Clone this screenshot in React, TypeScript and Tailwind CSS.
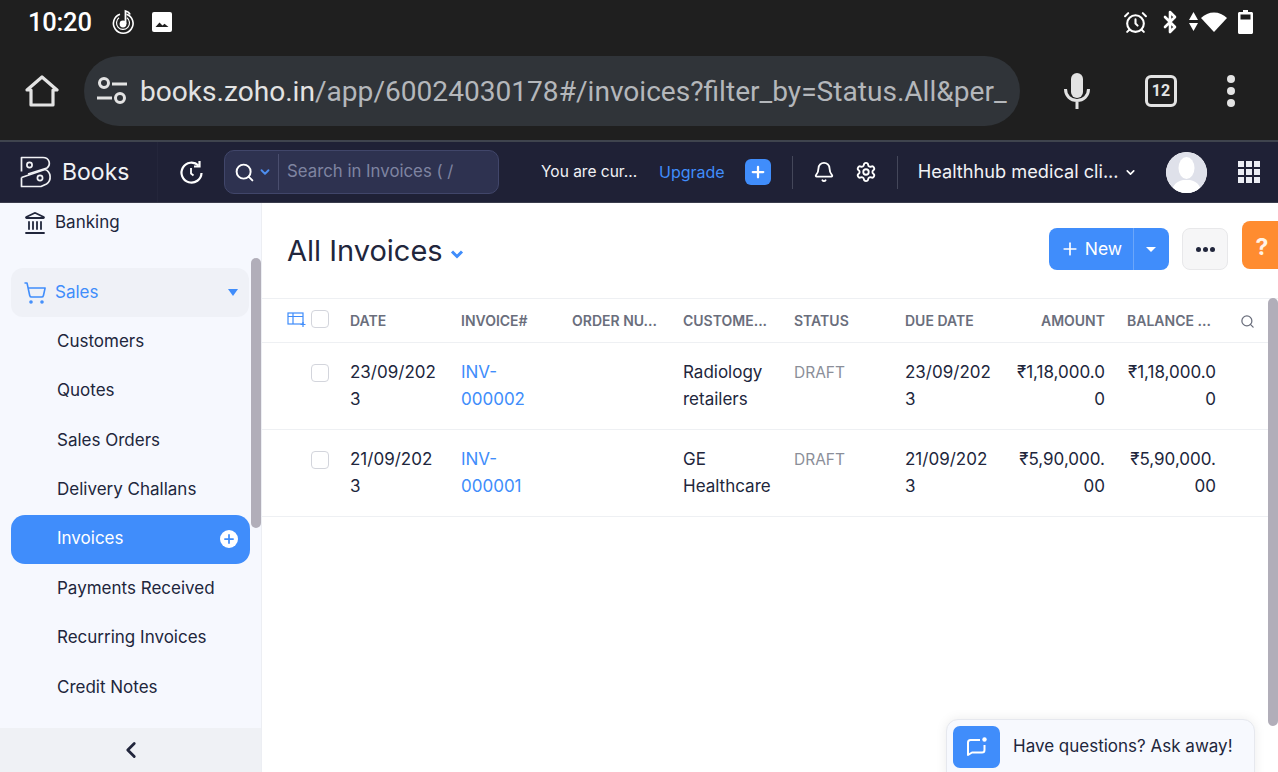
import React from 'react';
import { AlarmClock, Bluetooth, Search, Bell, Settings, ChevronLeft, ChevronDown, Plus, Landmark, ShoppingCart } from 'lucide-react';

const salesItems = ['Customers', 'Quotes', 'Sales Orders', 'Delivery Challans', 'Invoices', 'Payments Received', 'Recurring Invoices', 'Credit Notes'];

const invoices = [
  { date: ['23/09/202', '3'], no: ['INV-', '000002'], customer: ['Radiology', 'retailers'], due: ['23/09/202', '3'], amount: ['₹1,18,000.0', '0'] },
  { date: ['21/09/202', '3'], no: ['INV-', '000001'], customer: ['GE', 'Healthcare'], due: ['21/09/202', '3'], amount: ['₹5,90,000.', '00'] },
];

const Lines = ({ lines }: { lines: string[] }) => (
  <>
    {lines.map((l) => (
      <div key={l}>{l}</div>
    ))}
  </>
);

const BooksLogo = () => (
  <svg width="32" height="32" viewBox="0 0 32 32" fill="none" stroke="#f1f2f5" strokeWidth="1.700" strokeLinejoin="round">
    <path d="M1.500 15.500V1.500H23c6 0 8.500 6.500 4 10.500L8 18" />
    <path d="M1.500 21.500L25 13.500c6 2 7 11 1.500 14.500L21 30.500H1.500V21.500" />
    <circle cx="9.500" cy="9" r="2.600" />
    <circle cx="20" cy="22" r="2.600" />
  </svg>
);

const StatusBar = () => (
  <div className="h-[46px] flex items-center justify-between pl-[28px] pr-[25px] pb-[2px] text-white">
    <div className="flex items-center">
      <span className="font-['Roboto',sans-serif] text-[25.500px] font-medium tracking-[-0.2px]">10:20</span>
      <svg className="ml-[19px]" width="24" height="26" viewBox="0 0 24 26" fill="none" stroke="white" strokeWidth="1.600">
        <path d="M9 5.200a9.800 9.800 0 1 0 6.500 0" />
        <path d="M8 8.800a6.500 6.500 0 1 0 8 0" strokeWidth="1.200" />
        <circle cx="12" cy="15" r="3.400" fill="white" stroke="none" />
        <path d="M14.500 15V2c2 .5 3.800 1.500 4.500 3.500" strokeWidth="1.800" />
      </svg>
      <svg className="ml-[16px]" width="22" height="22" viewBox="0 0 22 22">
        <rect x="1" y="1" width="20" height="20" rx="2" fill="white" />
        <path d="M4.500 16l4-4.500 3 3 2-1.800 4 3.300z" fill="#1f1f1f" />
      </svg>
    </div>
    <div className="flex items-center">
      <AlarmClock size={25} strokeWidth={2} />
      <Bluetooth className="ml-[10px]" size={24} strokeWidth={2.600} />
      <svg className="ml-[7px]" width="9" height="20" viewBox="0 0 9 20" fill="white">
        <path d="M4.500 0L9 8H0zM0 11h9l-4.500 8z" />
      </svg>
      <svg className="ml-[3px]" width="26" height="20" viewBox="0 0 26 20" fill="white">
        <path d="M13 20L0 6c7-7.500 19-7.500 26 0z" />
      </svg>
      <svg className="ml-[11px]" width="15" height="24" viewBox="0 0 15 24" fill="white">
        <path d="M5 0h5v2h3.500c.8 0 1.500.7 1.500 1.500V22.500c0 .8-.7 1.500-1.500 1.500h-12C.7 24 0 23.300 0 22.500V3.500C0 2.700.7 2 1.500 2H5z" />
        <rect x="2.500" y="4.500" width="10" height="5" fill="#1f1f1f" />
      </svg>
    </div>
  </div>
);

const BrowserBar = () => (
  <div className="h-[94px] flex items-center text-[#e3e3e3] pb-[4px]">
    <div className="w-[84px] flex justify-center shrink-0">
      <svg width="34" height="34" viewBox="0 0 34 34" fill="none" stroke="#e3e3e3" strokeWidth="3.200" strokeLinejoin="round">
        <path d="M2 16L17 3l15 13h-4v15H6V16z" />
      </svg>
    </div>
    <div className="w-[936px] h-[70px] rounded-full bg-[#303439] flex items-center pl-[12px] pr-[14px] overflow-hidden shrink-0">
      <svg className="shrink-0" width="32" height="30" viewBox="0 0 32 30" fill="none" stroke="#e3e3e3" strokeWidth="3">
        <circle cx="8" cy="7" r="4.500" />
        <path d="M16 8h15M1 22h15" />
        <circle cx="24" cy="22" r="4.500" />
      </svg>
      <div className="ml-[12px] font-['Roboto',sans-serif] text-[28.100px] whitespace-nowrap leading-none pt-[3px]">
        books.zoho.in<span className="text-[#b4b7bb]">/app/60024030178#/invoices?filter_by=Status.All&amp;per_</span>
      </div>
    </div>
    <svg className="ml-[44px] shrink-0" width="26" height="36" viewBox="0 0 26 36" fill="none" stroke="#e3e3e3" strokeWidth="3">
      <rect x="7" y="0" width="12" height="25" rx="6" fill="#e3e3e3" stroke="none" />
      <path d="M1.500 16c0 7 5 11.500 11.500 11.500S24.500 23 24.500 16M13 27.500V36" />
    </svg>
    <div className="ml-[55px] w-[32px] h-[32px] rounded-[6px] border-[3px] border-[#e3e3e3] flex items-center justify-center font-['Roboto',sans-serif] font-bold text-[16px]">12</div>
    <div className="ml-[50px] flex flex-col gap-[4px]">
      <span className="w-[8px] h-[8px] rounded-full bg-[#e3e3e3]" />
      <span className="w-[8px] h-[8px] rounded-full bg-[#e3e3e3]" />
      <span className="w-[8px] h-[8px] rounded-full bg-[#e3e3e3]" />
    </div>
  </div>
);

const AppHeader = () => (
  <div className="h-[63px] bg-[#1f2136] border-t-[2px] border-b-[1px] border-t-[#3f444e] border-b-[#3a3c4c] flex items-center text-white text-[16px] shrink-0">
    <div className="w-[158px] h-full flex items-center pl-[20px] border-r border-[#24263b] shrink-0">
      <BooksLogo />
      <span className="ml-[10px] text-[23px] text-[#f1f2f5]">Books</span>
    </div>
    <svg className="ml-[21px] shrink-0" width="25" height="25" viewBox="0 0 25 25" fill="none" stroke="white" strokeWidth="2.200">
      <path d="M19.500 5.500A10 10 0 1 0 22.500 13" />
      <path d="M20.500 1v5.500H15" />
      <path d="M12 8v5.500l2.500 2" strokeWidth="1.800" />
    </svg>
    <div className="ml-[20px] w-[275px] h-[44px] rounded-[10px] bg-[#2e3250] border border-[#41466a] flex items-center shrink-0">
      <Search className="ml-[9px]" size={21} strokeWidth={2.200} />
      <ChevronDown className="ml-[3px] text-[#4d8ef0]" size={14} strokeWidth={3.200} />
      <span className="ml-[6px] w-px h-[36px] bg-[#4a4e6e]" />
      <span className="ml-[8px] text-[#7f84a1] text-[16.800px]">Search in Invoices ( /</span>
    </div>
    <span className="ml-[42px] w-[98px] text-[#f1f2f5] text-[15.500px] whitespace-nowrap">You are cur...</span>
    <span className="ml-[20px] text-[#408dfb]">Upgrade</span>
    <div className="ml-[20px] w-[26px] h-[26px] rounded-[6px] bg-[#408dfb] flex items-center justify-center">
      <Plus size={18} strokeWidth={3} />
    </div>
    <span className="ml-[21px] w-px h-[33px] bg-[#44475a]" />
    <Bell className="ml-[20px]" size={22} strokeWidth={2} />
    <Settings className="ml-[20px]" size={22} strokeWidth={2} />
    <span className="ml-[20px] w-px h-[33px] bg-[#44475a]" />
    <span className="ml-[20px] w-[207px] text-[#f1f2f5] text-[18.200px] whitespace-nowrap">Healthhub medical cli...</span>
    <ChevronDown className="ml-[-1px]" size={13} strokeWidth={3} />
    <div className="ml-[29px] w-[41px] h-[41px] rounded-full bg-white flex items-center justify-center overflow-hidden shrink-0">
      <svg width="41" height="41" viewBox="0 0 41 41">
        <circle cx="20.500" cy="20.500" r="20.500" fill="#dfe1ea" />
        <ellipse cx="20.500" cy="16" rx="8" ry="11" fill="white" />
        <path d="M6 41c0-9 6-12 11-13h7c5 1 11 4 11 13z" fill="white" />
      </svg>
    </div>
    <div className="ml-[31px] grid grid-cols-3 gap-[2px] shrink-0">
      {Array.from({ length: 9 }).map((_, i) => (
        <span key={i} className="w-[6px] h-[6px] bg-[#eceef4]" />
      ))}
    </div>
  </div>
);

const Sidebar = () => (
  <aside className="relative w-[262px] h-full bg-[#f6f8fe] border-r border-[#eceef3] shrink-0 flex flex-col overflow-hidden text-[#21263c] text-[17px]">
    <div className="flex-1 pl-[11px] pr-[12px]">
      <div className="h-[40px] flex items-center pl-[12px] text-[#21263c]">
        <Landmark size={24} strokeWidth={1.800} />
        <span className="ml-[8px]">Banking</span>
      </div>
      <div className="mt-[25px] h-[49px] rounded-[12px] bg-[#eff1f7] flex items-center pl-[12px] pr-[11px] text-[#408dfb] w-[238px]">
        <ShoppingCart size={24} strokeWidth={1.600} />
        <span className="ml-[8px] flex-1">Sales</span>
        <span className="w-0 h-0 border-x-[5px] border-x-transparent border-t-[7px] border-t-[#408dfb]" />
      </div>
      {salesItems.map((item) =>
        item === 'Invoices' ? (
          <div key={item} className="h-[49.400px] w-[239px] rounded-[14px] bg-[#408dfb] text-white flex items-center justify-between pl-[46px] pr-[12px]">
            <span className="pb-[2px]">{item}</span>
            <span className="w-[18px] h-[18px] rounded-full bg-white flex items-center justify-center text-[#408dfb]">
              <Plus size={14} strokeWidth={3} />
            </span>
          </div>
        ) : (
          <div key={item} className="h-[49.400px] flex items-center pl-[46px]">
            {item}
          </div>
        )
      )}
    </div>
    <div className="h-[44px] bg-[#eff1f5] flex items-center justify-center shrink-0">
      <ChevronLeft size={26} strokeWidth={2.600} />
    </div>
    <div className="absolute left-[251px] top-[55px] w-[10px] h-[270px] rounded-[5px] bg-[#b1aeb9]" />
  </aside>
);

const Cell = ({ children, className = '' }: { children?: React.ReactNode; className?: string }) => (
  <div className={`w-[111px] px-[11px] shrink-0 ${className}`}>{children}</div>
);

const Checkbox = () => <span className="block w-[18px] h-[18px] rounded-[4px] border border-[#d3d5dc] bg-white" />;

const InvoiceTable = () => (
  <div className="text-[17px] text-[#21263c] leading-[26.500px]">
    <div className="h-[45px] border-y border-[#eef0f3] flex items-center pt-[2px] text-[14px] font-semibold text-[#6a6e7c] whitespace-nowrap">
      <div className="w-[77px] shrink-0 flex items-center pl-[25px] gap-[5px] pb-[5px]">
        <svg width="19" height="16" viewBox="0 0 19 16" fill="none" stroke="#408dfb" strokeWidth="1.200">
          <rect x="1" y="2" width="15" height="11" />
          <path d="M1 5.500h15M6 2v11" />
          <path d="M16 11v5M13.500 13.500h5" />
        </svg>
        <Checkbox />
      </div>
      <Cell>DATE</Cell>
      <Cell>INVOICE#</Cell>
      <Cell>ORDER NU...</Cell>
      <Cell>CUSTOME...</Cell>
      <Cell>STATUS</Cell>
      <Cell>DUE DATE</Cell>
      <Cell className="text-right">AMOUNT</Cell>
      <Cell className="px-[10px]">BALANCE ...</Cell>
      <Search className="ml-[13px] text-[#6a6e7c]" size={15} strokeWidth={2} />
    </div>
    {invoices.map((inv) => (
      <div key={inv.no[1]} className="h-[87px] border-b border-[#eef0f3] flex items-start pt-[16px]">
        <div className="w-[77px] shrink-0 pl-[49px] pt-[5px]">
          <Checkbox />
        </div>
        <Cell><Lines lines={inv.date} /></Cell>
        <Cell className="text-[#408dfb]"><Lines lines={inv.no} /></Cell>
        <Cell />
        <Cell><Lines lines={inv.customer} /></Cell>
        <Cell className="text-[15.500px] text-[#8b8e99] pt-[1px]">DRAFT</Cell>
        <Cell><Lines lines={inv.due} /></Cell>
        <Cell className="text-right"><Lines lines={inv.amount} /></Cell>
        <Cell className="text-right"><Lines lines={inv.amount} /></Cell>
      </div>
    ))}
  </div>
);

const Main = () => (
  <main className="relative flex-1 min-w-0 h-full bg-white overflow-hidden">
    <div className="h-[95px] flex items-start pl-[25px]">
      <h1 className="mt-[29px] text-[29px] leading-[38px] text-[#21263c] whitespace-nowrap">All Invoices</h1>
      <svg className="ml-[7px] mt-[47px]" width="14" height="9" viewBox="0 0 14 9" fill="none" stroke="#408dfb" strokeWidth="3">
        <path d="M2 1.500l5 5 5-5" />
      </svg>
      <div className="ml-auto mt-[25px] h-[42px] w-[120px] rounded-[8px] bg-[#408dfb] text-white text-[17.500px] flex items-center">
        <div className="w-[85px] h-full flex items-center justify-center gap-[5px] border-r border-[#6ba6fa]">
          <Plus size={20} strokeWidth={2} />
          <span>New</span>
        </div>
        <span className="ml-[12px] w-0 h-0 border-x-[5px] border-x-transparent border-t-[5px] border-t-white" />
      </div>
      <div className="ml-[13px] mt-[25px] w-[46px] h-[42px] rounded-[8px] bg-[#f6f6f7] border border-[#e8e8ea] flex items-center justify-center gap-[2px]">
        <span className="w-[5px] h-[5px] rounded-full bg-[#21263c]" />
        <span className="w-[5px] h-[5px] rounded-full bg-[#21263c]" />
        <span className="w-[5px] h-[5px] rounded-full bg-[#21263c]" />
      </div>
      <div className="ml-[14px] mt-[18px] w-[36px] h-[48px] rounded-l-[8px] bg-[#ff8c30] text-[#fff3e6] text-[23px] font-bold flex items-center justify-center pl-[4px] pt-[4px] shrink-0">?</div>
    </div>
    <InvoiceTable />
    <div className="absolute left-[1006px] top-[95px] w-[10px] h-[428px] rounded-[5px] bg-[#b1aeb9]" />
    <div className="absolute left-[684px] top-[516px] w-[309px] h-[60px] rounded-t-[12px] bg-[#f7f9fe] border border-[#e6e8ee] shadow-[0_0_12px_rgba(0,0,0,0.08)] flex items-start pt-[6px] pl-[6px]">
      <div className="w-[47px] h-[42px] rounded-[7px] bg-[#408dfb] flex items-center justify-center">
        <svg width="22" height="20" viewBox="0 0 22 20" fill="none" stroke="white" strokeWidth="2">
          <path d="M14 3H4.500C3 3 2 4 2 5.500V18l4-2.500h10c1.500 0 2.500-1 2.500-2.500V8" strokeLinejoin="round" />
          <circle cx="18.500" cy="2.500" r="2.200" fill="white" stroke="none" />
        </svg>
      </div>
      <span className="ml-[13px] mt-[7px] text-[17px] leading-[26px] text-[#21263c] whitespace-nowrap">Have questions? Ask away!</span>
    </div>
  </main>
);

export default function App() {
  return (
    <div className="w-[1278px] h-[772px] overflow-hidden bg-[#1f1f1f] flex flex-col font-['Inter',sans-serif]">
      <StatusBar />
      <BrowserBar />
      <AppHeader />
      <div className="flex-1 min-h-0 flex">
        <Sidebar />
        <Main />
      </div>
    </div>
  );
}
